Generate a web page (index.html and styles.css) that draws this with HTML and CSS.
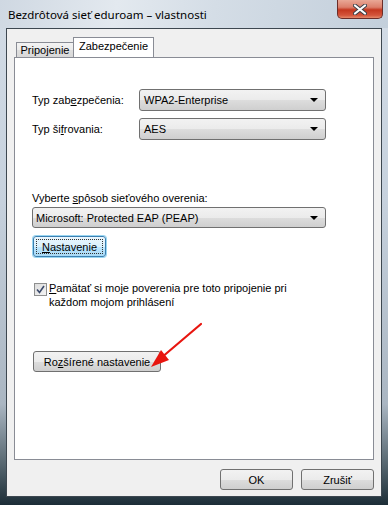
FILE: index.html
```html
<!DOCTYPE html>
<html>
 <head>
  <meta charset="UTF-8">
  <title>Bezdrôtová sieť eduroam – vlastnosti</title>
  <link rel="stylesheet" href="styles.css">
 </head>
 <body>
	<div class="window">
		<div class="titlebar">
			<span class="title">Bezdrôtová sieť eduroam – vlastnosti</span>
			<span class="close">
				<svg width="14" height="11" viewBox="0 0 14 11">
					<path d="M2 1.5 L12 9.5 M12 1.5 L2 9.5" stroke="#3a3f47" stroke-width="4" stroke-linecap="round"/>
					<path d="M2 1.5 L12 9.5 M12 1.5 L2 9.5" stroke="#ffffff" stroke-width="2.2" stroke-linecap="round"/>
				</svg>
			</span>
		</div>
		<div class="client">
			<div class="tabs">
				<span class="tab">Pripojenie</span>
				<span class="tab active">Zabezpečenie</span>
			</div>
			<div class="panel">
				<div class="row first">
					<span class="label">Typ zab<u>e</u>zpečenia:</span>
					<span class="combo"><span>WPA2-Enterprise</span><span class="arrow"></span></span>
				</div>
				<div class="row">
					<span class="label">Typ ši<u>f</u>rovania:</span>
					<span class="combo"><span>AES</span><span class="arrow"></span></span>
				</div>
				<div class="caption">Vyberte <u>s</u>pôsob sieťového overenia:</div>
				<span class="combo wide"><span>Microsoft: Protected EAP (PEAP)</span><span class="arrow"></span></span>
				<div class="btnrow">
					<span class="button default"><span class="focus"><span><u>N</u>astavenie</span></span></span>
				</div>
				<div class="check">
					<span class="box">
						<svg width="9" height="9" viewBox="0 0 9 9">
							<path d="M1 4.5 L3.5 7.5 L8 1" fill="none" stroke="#3b4a6b" stroke-width="1.6"/>
						</svg>
					</span>
					<span class="checktext"><u>P</u>amätať si moje poverenia pre toto pripojenie pri<br>každom mojom prihlásení</span>
				</div>
				<div class="btnrow advanced">
					<span class="button"><span>Ro<u>z</u>šírené nastavenie</span></span>
				</div>
				<svg class="pointer" width="60" height="50" viewBox="0 0 60 50">
					<path d="M54 2 L14 36" stroke="#e8150f" stroke-width="2.2" stroke-linecap="round"/>
					<path d="M4 45 L14 28 L22 38 Z" fill="#e8150f"/>
				</svg>
			</div>
			<div class="buttons">
				<span class="button"><span>OK</span></span>
				<span class="button"><span>Zrušiť</span></span>
			</div>
		</div>
	</div>
 </body>
</html>
```

FILE: styles.css
```css
html,body{
	margin: 0;
	padding: 0;
	font-size: 11px;
	font-family: "Liberation Sans", Arial, sans-serif;
	color: #000;
}
.window{
	width: 388px;
	height: 505px;
	box-sizing: border-box;
	padding: 0 6px 8px 6px;
	display: flex;
	flex-direction: column;
	background: linear-gradient(to bottom, #d3dce6 0%, #c6d1dd 40%, #aab6c2 80%, #56666f 92%, #1c2d37 100%);
	overflow: hidden;
}
.titlebar{
	height: 28px;
	flex: none;
	display: flex;
	justify-content: space-between;
	align-items: flex-start;
	margin: 0 -6px;
	padding: 0 6px 0 8px;
	background: linear-gradient(100deg, #cfd8e2 0%, #e3e9ef 30%, #d4dde6 55%, #c3cfdb 100%);
}
.title{
	padding-top: 7px;
	line-height: 15px;
	font-family: "Noto Sans", sans-serif;
	font-size: 11.5px;
}
.close{
	width: 46px;
	height: 19px;
	box-sizing: border-box;
	border: 1px solid #6b2d28;
	border-top: none;
	border-radius: 0 0 5px 5px;
	background: linear-gradient(to bottom, #e9a896 0%, #dc7f6b 40%, #c4371f 55%, #d4553b 85%, #e58a6b 100%);
	display: flex;
	align-items: center;
	justify-content: center;
	margin-right: -1px;
}
.client{
	flex: 1;
	border: 1px solid #3d4750;
	background: #f0f0f0;
	padding: 8px 7px 6px 7px;
	display: flex;
	flex-direction: column;
}
.tabs{
	height: 20px;
	display: flex;
	align-items: flex-end;
	padding-left: 2px;
}
.tab{
	width: 57px;
	height: 15px;
	box-sizing: border-box;
	border: 1px solid #898c95;
	border-bottom: none;
	border-right: none;
	text-align: center;
	line-height: 14px;
	white-space: nowrap;
	background: linear-gradient(to bottom, #f3f3f3 0%, #ebebeb 50%, #dedede 51%, #d8d8d8 100%);
}
.tab.active{
	width: 81px;
	border-right: 1px solid #898c95;
	background: #fff;
	padding-top: 1px;
	margin-bottom: -1px;
	height: 21px;
	position: relative;
}
.panel{
	height: 403px;
	box-sizing: border-box;
	border: 1px solid #898c95;
	background: #fff;
	padding: 31px 0 0 17px;
	position: relative;
}
.row{
	display: flex;
	align-items: center;
	height: 22px;
	margin-bottom: 7px;
}
.label{
	width: 107px;
}
.combo{
	display: flex;
	align-items: center;
	height: 22px;
	box-sizing: border-box;
	width: 187px;
	border: 1px solid #707070;
	border-radius: 3px;
	padding-left: 4px;
	position: relative;
	white-space: nowrap;
	background: linear-gradient(to bottom, #f2f2f2 0%, #ebebeb 50%, #dddddd 51%, #cfcfcf 100%);
}
.combo.wide{
	width: 294px;
	height: 21px;
	padding-left: 3px;
}
.arrow{
	position: absolute;
	right: 7px;
	top: 8px;
	border-left: 4px solid transparent;
	border-right: 4px solid transparent;
	border-top: 4px solid #000;
}
.caption{
	margin-top: 51px;
	line-height: 15px;
	margin-bottom: 1px;
}
.btnrow{
	margin-top: 8px;
	margin-left: 1px;
	display: flex;
}
.button{
	display: flex;
	align-items: center;
	justify-content: center;
	height: 21px;
	box-sizing: border-box;
	border: 1px solid #707070;
	border-radius: 3px;
	white-space: nowrap;
	background: linear-gradient(to bottom, #f2f2f2 0%, #ebebeb 50%, #dddddd 51%, #cfcfcf 100%);
}
.button.default{
	width: 73px;
	padding: 2px;
	border-color: #3c7fb1;
	background: linear-gradient(to bottom, #eaf6fd 0%, #d9f0fc 50%, #bee6fd 51%, #a7d9f5 100%);
	box-shadow: 0 0 0 1px #9ad6f1;
}
.focus{
	flex: 1;
	height: 100%;
	display: flex;
	align-items: center;
	justify-content: center;
	box-sizing: border-box;
	border: 1px dotted #333;
}
.check{
	display: flex;
	align-items: flex-start;
	margin-top: 24px;
}
.box{
	flex: none;
	width: 13px;
	height: 13px;
	box-sizing: border-box;
	border: 1px solid #8e8f8f;
	background: linear-gradient(135deg, #dcdcdc 0%, #f4f4f4 100%);
	margin: 2px 2px 0 2px;
	display: flex;
	align-items: center;
	justify-content: center;
}
.checktext{
	line-height: 14px;
	white-space: nowrap;
}
.advanced{
	margin-top: 42px;
}
.advanced .button{
	width: 128px;
}
.pointer{
	position: absolute;
	left: 132px;
	top: 264px;
}
.buttons{
	margin-top: 9px;
	display: flex;
	justify-content: flex-end;
	gap: 8px;
}
.buttons .button{
	width: 73px;
}
```
